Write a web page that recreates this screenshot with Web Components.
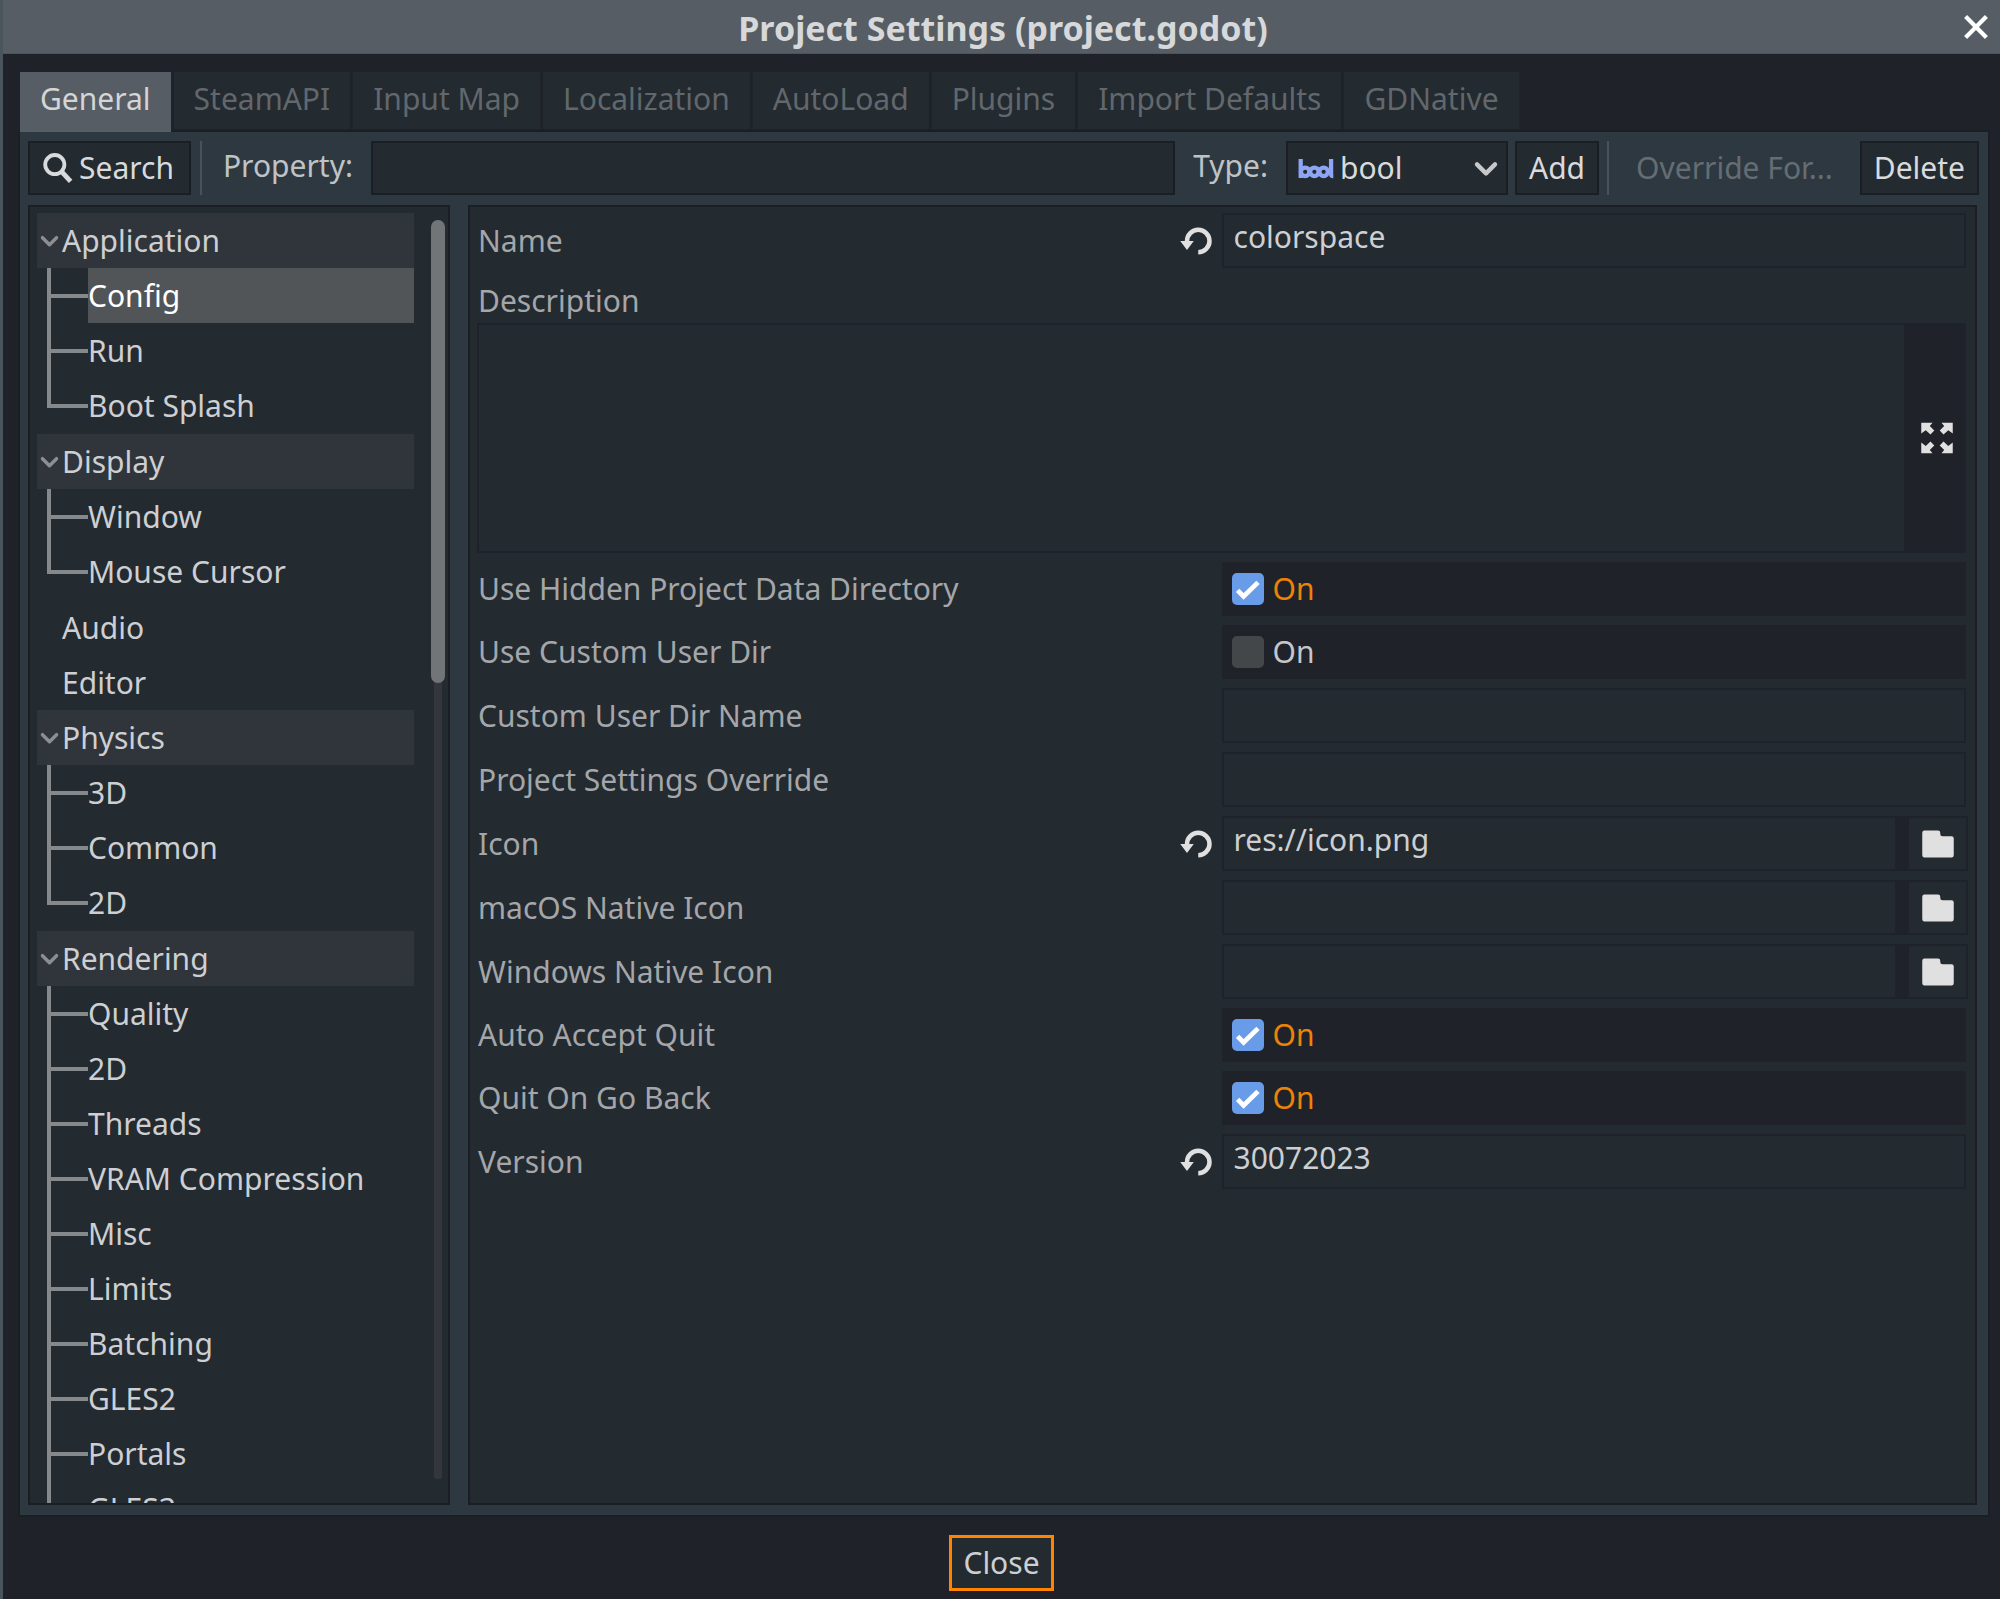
<!DOCTYPE html>
<html lang="en">
<head>
<meta charset="utf-8">
<title>Project Settings (project.godot)</title>
<style>
html,body{height:100%}
body{margin:0;background:#1f2229;color:#cdcfd2;font:30px/38px "Noto Sans","Liberation Sans",sans-serif;
--dark:#1f2229;--panel:#2e3840;--inner:#232a30;--edge:#1b1f24;--line:#1f222a;--accent:#ff8500}
settings-window{height:100vh}
</style>
</head>
<body>
<settings-window heading="Project Settings (project.godot)">
  <settings-tabs slot="tabs"></settings-tabs>
  <property-bar></property-bar>
  <split-view>
    <settings-tree></settings-tree>
    <property-list></property-list>
  </split-view>
</settings-window>
<script>
const base = `
*{box-sizing:border-box}
button,input,textarea,select{font:inherit;color:inherit;margin:0;border-radius:0;outline:0}
button{cursor:pointer}
svg{display:block;flex:none}`;

function define(name, css, html) {
  customElements.define(name, class extends HTMLElement {
    constructor() {
      super();
      this.attachShadow({mode: "open"});
    }
    connectedCallback() {
      if (this.shadowRoot.firstChild) return;
      this.shadowRoot.innerHTML = `<style>${base}${css}</style>` + (typeof html === "function" ? html(this) : html);
    }
  });
}

const arrow = '<path d="M1 1.200h5L4.800 2.700l2 2-1.700 1.700L3 4.500 1 6z"/>';
const icons = {
  search: '<g fill="none" stroke="currentColor"><circle cx="6.900" cy="6.300" r="4.800" stroke-width="1.900"/><path d="M10.300 9.800l4.500 4.900" stroke-width="2.400"/></g>',
  close: '<path d="M2.800 2.800l10.400 10.400M13.200 2.800l-10.400 10.400" fill="none" stroke="currentColor" stroke-width="2.100"/>',
  down: '<path d="M3.500 6.200L8 10.700l4.500-4.500" fill="none" stroke="currentColor" stroke-width="2.200" stroke-linecap="round" stroke-linejoin="round"/>',
  reload: '<path d="M9 2a6 6 0 0 0-6 6H1l3 4 3-4H5a4 4 0 0 1 4-4 4 4 0 0 1 4 4 4 4 0 0 1-4 4v2a6 6 0 0 0 6-6 6 6 0 0 0-6-6z"/>',
  folder: '<path d="M2 2a1 1 0 0 0-1 1v10a1 1 0 0 0 1 1h12a1 1 0 0 0 1-1V5.500a1 1 0 0 0-1-1h-4a1 1 0 0 1-1-1V3a1 1 0 0 0-1-1z"/>',
  expand: `${arrow}<g transform="matrix(-1 0 0 1 16 0)">${arrow}</g><g transform="matrix(1 0 0 -1 0 16)">${arrow}</g><g transform="matrix(-1 0 0 -1 16 16)">${arrow}</g>`,
  check: '<path d="M2.800 8.700l3 3L13 4.700" fill="none" stroke="currentColor" stroke-width="2.400"/>',
  bool: '<g fill="none" stroke="currentColor" stroke-width="1.900"><path d="M1.200 4v8.400M14.700 4v6.400q0 1.200 1 1.200"/><circle cx="3.200" cy="9.700" r="1.900"/><circle cx="7.300" cy="9.700" r="1.900"/><circle cx="11.400" cy="9.700" r="1.900"/></g><path d="M4.200 8.800h2v1.800h-2zM8.300 8.800h2v1.800h-2zM12.600 8.800h1.800v1.800h-1.800z"/>'
};

define("ui-icon", `:host{display:block;width:var(--icon,32px);height:var(--icon,32px)}svg{width:100%;height:100%}`,
  el => `<svg viewBox="0 0 16 16" fill="currentColor" aria-hidden="true">${icons[el.getAttribute("name")]}</svg>`);

define("settings-window", `
:host{display:flex;flex-direction:column;background:var(--dark);border-left:3px solid #4a545c;overflow:hidden}
header{display:grid;grid-template-columns:54px 1fr 48px;align-items:center;height:54px;background:#565d64;margin-left:-3px;flex:none;border-bottom:1px solid #4b545c}
h1{margin:0;font-size:34px;line-height:44px;padding-top:2px;font-weight:700;text-align:center;color:#d6d8da}
header button{grid-column:3;border:0;background:none;padding:0;color:#fff;justify-self:center}
main{flex:1;display:flex;flex-direction:column;min-height:0;padding:18px 10px 0 15px}
.panel{flex:1;min-height:0;display:flex;flex-direction:column;gap:10px;background:var(--panel);border:2px solid var(--edge);padding:9px 9px 10px 8px}
footer{display:flex;justify-content:center;padding:18px 0 8px;flex:none}
footer button{border:3px solid var(--accent);background:var(--inner);padding:0 11px;height:56px;line-height:50px}
`, el => `<header><span></span><h1>${el.getAttribute("heading")}</h1><button aria-label="Close window"><ui-icon name="close"></ui-icon></button></header>
<main><slot name="tabs"></slot><div class="panel"><slot></slot></div></main>
<footer><button>Close</button></footer>`);

define("settings-tabs", `
:host{display:block;position:relative;z-index:1}
nav{display:flex;gap:3px;padding-left:2px;align-items:flex-start}
button{border:0;background:var(--inner);color:#62676c;padding:0 20px 3px;height:57px;line-height:54px}
button[aria-selected=true]{background:#565d64;color:#d3d5d7;height:60px;padding-bottom:6px;margin-bottom:-2px}
`, `<nav role="tablist">${["General","SteamAPI","Input Map","Localization","AutoLoad","Plugins","Import Defaults","GDNative"].map((t,i)=>`<button role="tab" aria-selected="${i===0}">${t}</button>`).join("")}</nav>`);

define("property-bar", `
:host{display:flex;height:54px;flex:none;align-items:stretch}
button,input,.type{border:2px solid var(--edge);background:var(--inner)}
button{padding:0 12px;line-height:50px;color:#d8dadc}
.search{display:flex;align-items:center;gap:6px;padding:0 15px 0 11px}
i{width:2px;background:#48525a}
.s1{margin:0 21px 0 9px}
.s2{margin-left:8px}
label{line-height:50px;color:#bfc3c6}
input{flex:1;min-width:0;padding:0 12px;margin:0 18px}
.type{position:relative;display:flex;align-items:center;width:222px;color:#d8dadc;margin:0 7px 0 18px}
.type ui-icon{position:absolute;pointer-events:none}
.type .b{left:10px;color:#8da5f3;--icon:36px}
.type .d{right:4px;color:#c6c8ca}
select{appearance:none;width:100%;height:100%;border:0;background:none;padding:0 44px 0 52px}
.ov{border:0;background:none;color:#656d74;padding:0 27px}
`, `<button class="search"><ui-icon name="search"></ui-icon>Search</button>
<i class="s1"></i><label for="p">Property:</label>
<input id="p"><label for="t">Type:</label>
<div class="type"><ui-icon class="b" name="bool"></ui-icon><select id="t"><option>bool</option></select><ui-icon class="d" name="down"></ui-icon></div>
<button>Add</button><i class="s2"></i><button class="ov" disabled>Override For...</button><button>Delete</button>`);

define("split-view", `:host{flex:1;min-height:0;display:grid;grid-template-columns:422px 1fr;gap:18px;padding-right:2px}`, `<slot></slot>`);

const tree = [
  ["Application", ["Config","Run","Boot Splash"]],
  ["Display", ["Window","Mouse Cursor"]],
  ["Audio"], ["Editor"],
  ["Physics", ["3D","Common","2D"]],
  ["Rendering", ["Quality","2D","Threads","VRAM Compression","Misc","Limits","Batching","GLES2","Portals","GLES3"]]
];
define("settings-tree", `
:host{display:flex;gap:17px;border:2px solid var(--edge);background:var(--inner);padding:6px 3px 0 7px;overflow:hidden;min-height:0}
.items{flex:1;min-width:0}
ul{list-style:none;margin:0;padding:0}
.head,.leaf{display:flex;align-items:center;height:55px}
.head{background:#30353c}
.group{margin-bottom:1px}
.head ui-icon{--icon:25px;color:#8c8f92}
.plain{padding-left:25px}
.group>ul{padding-left:10px}
.group li{display:flex;height:55px}
.twig{width:41px;display:grid;grid-template-rows:26px 4px 1fr;flex:none}
.twig b{background:#86898c}
.twig b:nth-child(1),.twig b:nth-child(3){width:4px}
li:last-child .twig b:nth-child(3){display:none}
.leaf{flex:1;white-space:nowrap}
.sel{background:#515558;color:#fff}
.track{width:14px;margin:7px 0 24px;display:flex;flex-direction:column;align-items:center;flex:none;background:linear-gradient(#33373d,#33373d) center/8px 100% no-repeat;border-radius:7px}
.thumb{width:14px;height:36.800%;border-radius:7px;background:#727578}
`, `<div class="items">${tree.map(([n,k]) => k ? `<div class="group"><div class="head"><ui-icon name="down"></ui-icon>${n}</div><ul>${k.map(c=>`<li><span class="twig"><b></b><b></b><b></b></span><span class="leaf${c==="Config"?" sel":""}">${c}</span></li>`).join("")}</ul></div>` : `<div class="leaf plain">${n}</div>`).join("")}</div><div class="track"><div class="thumb"></div></div>`);

define("property-list", `
:host{display:flex;flex-direction:column;gap:9px;border:2px solid var(--edge);background:var(--inner);padding:6px 9px 9px 7px;min-width:0;min-height:0;overflow:hidden}`,
`<property-row label="Name" kind="text" value="colorspace" changed></property-row>
<property-row label="Description" kind="area"></property-row>
<property-row label="Use Hidden Project Data Directory" kind="bool" on></property-row>
<property-row label="Use Custom User Dir" kind="bool"></property-row>
<property-row label="Custom User Dir Name" kind="text"></property-row>
<property-row label="Project Settings Override" kind="text"></property-row>
<property-row label="Icon" kind="file" value="res://icon.png" changed></property-row>
<property-row label="macOS Native Icon" kind="file"></property-row>
<property-row label="Windows Native Icon" kind="file"></property-row>
<property-row label="Auto Accept Quit" kind="bool" on></property-row>
<property-row label="Quit On Go Back" kind="bool" on></property-row>
<property-row label="Version" kind="text" value="30072023" changed></property-row>`);

define("property-row", `
:host{display:grid;grid-template-columns:1fr 1fr;height:55px;flex:none}
:host([kind=bool]){height:54px}
:host([kind=area]){display:block;height:auto}
label{color:#a4a6a9}
.name{display:flex;align-items:center;justify-content:space-between;padding:0 8px 0 1px}
.name button{border:0;background:none;padding:0;color:#e0e0e0;--icon:36px}
input[type=text]{display:block;width:100%;height:55px;border:2px solid var(--line);background:none;padding:0 10px 9px}
.bool{display:flex;align-items:center;gap:9px;background:var(--dark);padding:0 10px;color:#c5c7ca}
.bool.on{color:#ee8208}
.box{display:grid;width:32px;height:32px}
.box>*{grid-area:1/1}
.box input{appearance:none;width:32px;height:32px;border-radius:5px;background:#43474a}
.box input:checked{background:#699ce8}
.box ui-icon{color:#fff;pointer-events:none}
.file{display:flex;background:var(--dark);margin-right:-2px}
.file input{flex:1;min-width:0;background:var(--inner)}
.file button{width:61px;margin-left:10px;border:2px solid var(--line);background:var(--inner);padding:0;display:grid;place-items:center;color:#e0e0e0;--icon:36px}
.area-label{display:block;padding:4px 1px 3px;line-height:39px}
.area{display:flex;height:230px;background:var(--dark);border:2px solid var(--line)}
textarea{flex:1;border:0;resize:none;background:var(--inner);padding:8px}
.area button{width:60px;border:0;background:none;display:grid;place-items:center;padding:0 0 0 6px;color:#e0e0e0;--icon:36px}
`, el => {
  const l = el.getAttribute("label"), k = el.getAttribute("kind"), v = el.getAttribute("value") || "", on = el.hasAttribute("on");
  if (k === "area") return `<label class="area-label" for="f">${l}</label><div class="area"><textarea id="f"></textarea><button aria-label="Expand editor"><ui-icon name="expand"></ui-icon></button></div>`;
  const name = `<div class="name"><label for="f">${l}</label>${el.hasAttribute("changed") ? '<button aria-label="Revert value"><ui-icon name="reload"></ui-icon></button>' : ""}</div>`;
  if (k === "bool") return name + `<div class="bool${on?" on":""}"><span class="box"><input id="f" type="checkbox"${on?" checked":""}>${on?'<ui-icon name="check"></ui-icon>':""}</span><span>On</span></div>`;
  if (k === "file") return name + `<div class="file"><input id="f" type="text" value="${v}"><button aria-label="Browse"><ui-icon name="folder"></ui-icon></button></div>`;
  return name + `<input id="f" type="text" value="${v}">`;
});
</script>
</body>
</html>
